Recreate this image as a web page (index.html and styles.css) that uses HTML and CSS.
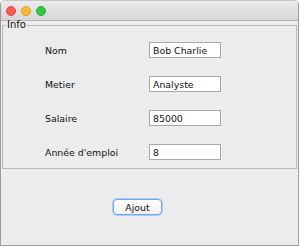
FILE: index.html
```html
<!DOCTYPE html>
<html lang="fr">

<head>
    <meta charset="UTF-8">
    <meta name="viewport" content="width=device-width, initial-scale=1.0">
    <title>Info</title>
    <link rel="stylesheet" href="styles.css">
</head>

<body>
    <div class="window">
        <div class="titlebar">
            <span class="light red"></span>
            <span class="light yellow"></span>
            <span class="light green"></span>
        </div>

        <fieldset class="info">
            <legend>Info</legend>
            <div class="rows">
                <label>Nom</label>
                <input class="text" type="text" value="Bob Charlie">
                <label>Metier</label>
                <input class="text" type="text" value="Analyste">
                <label>Salaire</label>
                <input class="text" type="text" value="85000">
                <label>Année d'emploi</label>
                <input class="text" type="text" value="8">
            </div>
        </fieldset>

        <button class="button">Ajout</button>
    </div>
</body>

</html>
```

FILE: styles.css
```css
* {
    box-sizing: border-box;
    font-family: "DejaVu Sans", sans-serif;
    font-size: 9.4px;
}

body {
    margin: 0;
    background-color: #ffffff;
}

.window {
    width: 299px;
    height: 246px;
    background-color: #ececec;
    border: 1px solid #9c9c9c;
    border-top-color: #c8c8c8;
    border-radius: 5px 5px 0 0;
    overflow: hidden;
}

.titlebar {
    display: flex;
    align-items: center;
    gap: 5px;
    height: 20px;
    padding-left: 5px;
    background: linear-gradient(#ececec, #d6d6d6);
    border-bottom: 1px solid #b4b4b4;
}

.light {
    width: 10px;
    height: 10px;
    border-radius: 50%;
}

.red {
    background-color: #fc5b57;
    border: 1px solid #e2463f;
}

.yellow {
    background-color: #fdbc2e;
    border: 1px solid #e1a116;
}

.green {
    background-color: #33c748;
    border: 1px solid #27aa35;
}

fieldset.info {
    margin: 0 1px;
    padding: 0 0 8px 0;
    border: 1px solid #b9b9b9;
}

legend {
    padding: 0 1px;
    margin-left: 3px;
    line-height: 8px;
    font-size: 10px;
    color: #111;
}

.rows {
    display: grid;
    grid-template-columns: 104px 72px;
    row-gap: 18px;
    align-items: center;
    padding: 13px 0 0 42px;
}

label {
    color: #111;
}

input.text {
    height: 16px;
    width: 72px;
    padding: 0 3px;
    border: 1px solid #a9a9a9;
    background-color: #fff;
    color: #111;
}

.button {
    display: block;
    margin: 30px 0 0 112px;
    width: 49px;
    height: 16px;
    padding: 0;
    background: linear-gradient(#ffffff, #f1f1f1);
    border: 1px solid #6fa4ea;
    border-radius: 4px;
    box-shadow: 0 0 0 1px #a9cdf7;
    color: #111;
}
```
